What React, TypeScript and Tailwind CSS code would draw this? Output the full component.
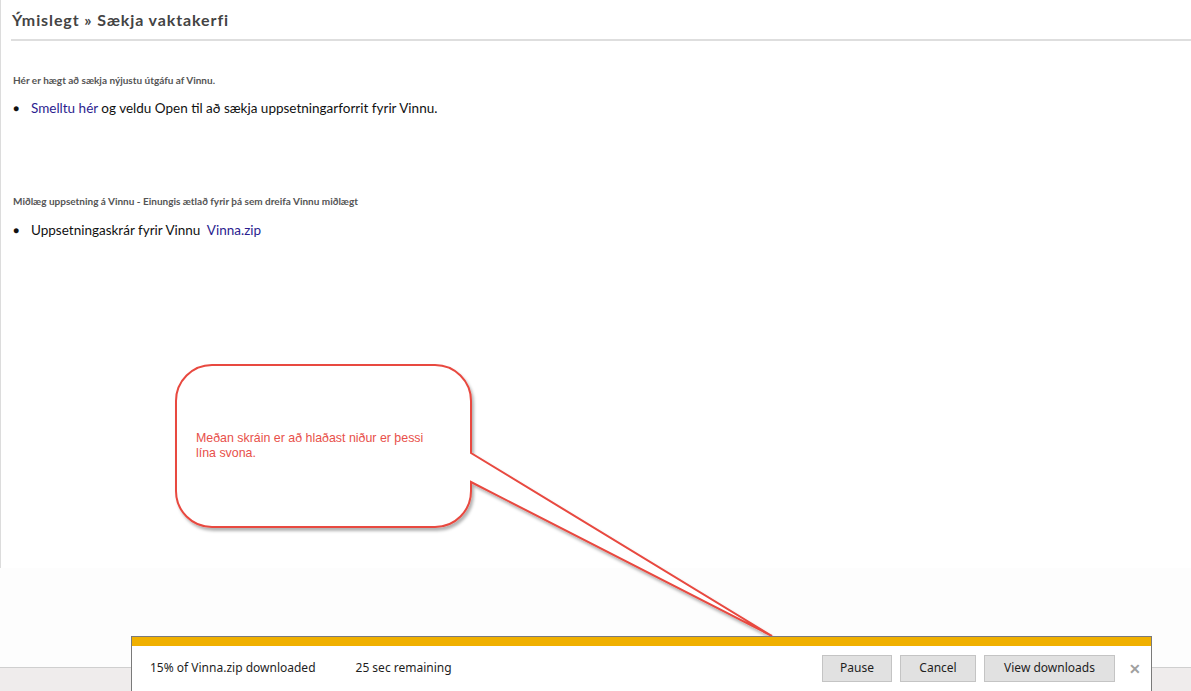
import React from 'react';

const Callout: React.FC = () => {
  return (
    <>
      {/* Speech bubble drawn over the page */}
      <svg
        className="absolute left-0 top-0 pointer-events-none"
        width={1191}
        height={691}
        viewBox="0 0 1191 691"
      >
        <defs>
          <filter id="bubbleShadow" x="-10%" y="-10%" width="130%" height="130%">
            <feDropShadow dx="2" dy="3" stdDeviation="1.5" floodColor="#000" floodOpacity="0.3" />
          </filter>
        </defs>
        <path
          d="M 212 365 H 435 A 36 36 0 0 1 471 401 V 453 L 772 636 L 471 482 V 491 A 36 36 0 0 1 435 527 H 212 A 36 36 0 0 1 176 491 V 401 A 36 36 0 0 1 212 365 Z"
          fill="#ffffff"
          stroke="#e8483f"
          strokeWidth={2}
          strokeLinejoin="miter"
          filter="url(#bubbleShadow)"
        />
      </svg>
      <div className="absolute left-[196px] top-[431px] w-[262px] text-[12.4px] leading-[15px] text-[#e8504a] font-['Liberation_Sans',Arial,sans-serif]">
        Meðan skráin er að hlaðast niður er þessi
        <br />
        lína svona.
      </div>
    </>
  );
};

const DownloadBar: React.FC = () => {
  return (
    <div className="absolute left-[131px] top-[636px] w-[1021px] h-[60px] bg-white border border-[#7a7a7a] font-['Noto_Sans',sans-serif] text-[12px] text-[#1e1e1e]">
      <div className="h-[9px] bg-[#f0b000]" />
      <div className="flex items-center h-[44px] pl-[18px] pr-[10px]">
        <span>15% of Vinna.zip downloaded</span>
        <span className="ml-[40px]">25 sec remaining</span>
        <div className="ml-auto flex items-center gap-[8px]">
          <button className="w-[70px] h-[27px] bg-[#e1e1e1] border border-[#c4c4c4]">Pause</button>
          <button className="w-[76px] h-[27px] bg-[#e1e1e1] border border-[#c4c4c4]">Cancel</button>
          <button className="w-[131px] h-[27px] bg-[#e1e1e1] border border-[#c4c4c4]">View downloads</button>
          <span className="ml-[6px] text-[14px] font-bold text-[#a0a0a0]">✕</span>
        </div>
      </div>
    </div>
  );
};

export default function App() {
  return (
    <div className="relative w-[1191px] h-[691px] overflow-hidden bg-[#fdfdfd] font-['Lato',sans-serif]">
      {/* Page body */}
      <div className="h-[568px] border-l border-[#dcdcdc] bg-white">
        <div className="pt-[10px] pl-[10px]">
          <h1 className="text-[16px] leading-[20px] font-bold text-[#444] tracking-[0.9px] pl-[1px]">
            Ýmislegt » Sækja vaktakerfi
          </h1>
          <div className="mt-[9px] h-[2px] bg-[#dedede]" />
        </div>

        <div className="pl-[12px]">
          <p className="mt-[33px] text-[10px] leading-[13px] font-bold text-[#555]">
            Hér er hægt að sækja nýjustu útgáfu af Vinnu.
          </p>
          <ul className="mt-[13px] text-[13.5px] leading-[16px] text-[#111]">
            <li className="flex items-center">
              <span className="w-[18px] text-[10px]">●</span>
              <span>
                <a href="#" className="text-[#2b1d8f]">Smelltu hér</a> og veldu Open til að sækja uppsetningarforrit fyrir Vinnu.
              </span>
            </li>
          </ul>

          <p className="mt-[79px] text-[10px] leading-[13px] font-bold text-[#555]">
            Miðlæg uppsetning á Vinnu - Einungis ætlað fyrir þá sem dreifa Vinnu miðlægt
          </p>
          <ul className="mt-[14px] text-[13.5px] leading-[16px] text-[#111]">
            <li className="flex items-center">
              <span className="w-[18px] text-[10px]">●</span>
              <span>
                Uppsetningaskrár fyrir Vinnu&nbsp;&nbsp;<a href="#" className="text-[#2b1d8f]">Vinna.zip</a>
              </span>
            </li>
          </ul>
        </div>
      </div>

      {/* Bottom strip */}
      <div className="absolute left-0 right-0 top-[667px] bottom-0 bg-[#efecec] border-t border-[#cfcfcf]" />

      <Callout />
      <DownloadBar />
    </div>
  );
}
